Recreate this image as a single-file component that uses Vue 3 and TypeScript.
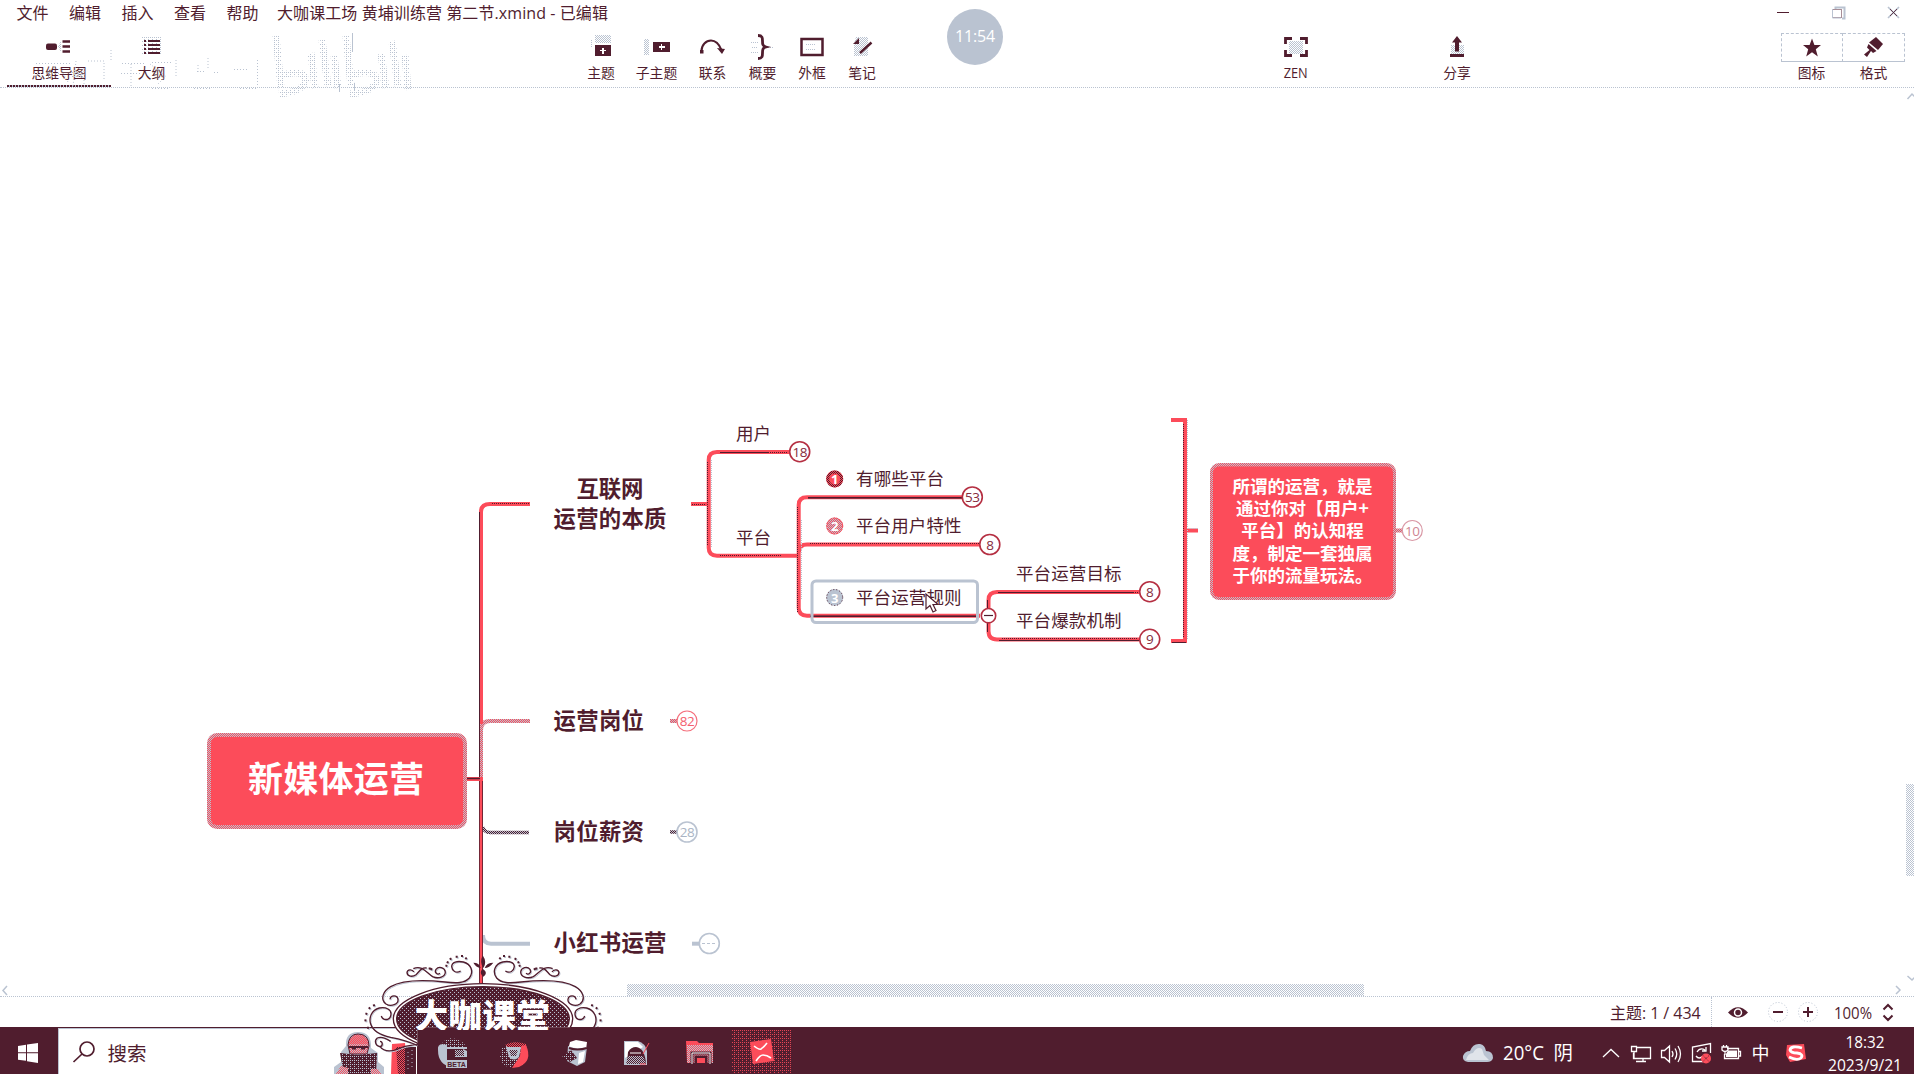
<script setup lang="ts">
interface Label { text: string; x: number; y: number; size: number; bold?: boolean; w: number }
interface Badge { n: string; x: number; y: number; tone: string }

const menus: string[] = ['文件', '编辑', '插入', '查看', '帮助']

const labels: Label[] = [
  { text: '互联网', x: 576.5, y: 489, size: 22.4, bold: true, w: 67 },
  { text: '运营的本质', x: 553.5, y: 519, size: 22.4, bold: true, w: 113 },
  { text: '运营岗位', x: 553.5, y: 721, size: 22.4, bold: true, w: 90.5 },
  { text: '岗位薪资', x: 553.5, y: 832, size: 22.4, bold: true, w: 90.5 },
  { text: '小红书运营', x: 553.5, y: 943, size: 22.4, bold: true, w: 113 },
  { text: '用户', x: 736, y: 433.5, size: 17.5, w: 35 },
  { text: '平台', x: 736, y: 537.5, size: 17.5, w: 35 },
  { text: '有哪些平台', x: 856, y: 479, size: 17.5, w: 88 },
  { text: '平台用户特性', x: 856, y: 526, size: 17.5, w: 105.5 },
  { text: '平台运营规则', x: 856, y: 598, size: 17.5, w: 105.5 },
  { text: '平台运营目标', x: 1016, y: 574, size: 17.5, w: 105.5 },
  { text: '平台爆款机制', x: 1016, y: 621, size: 17.5, w: 105.5 }
]

const badges: Badge[] = [
  { n: '18', x: 799.7, y: 451.7, tone: 'mix' },
  { n: '53', x: 972.3, y: 497, tone: 'mix' },
  { n: '8', x: 989.8, y: 544.5, tone: 'mix' },
  { n: '8', x: 1149.7, y: 591.7, tone: 'mix' },
  { n: '9', x: 1149.7, y: 639.3, tone: 'mix' },
  { n: '82', x: 687, y: 721, tone: 'soft' },
  { n: '28', x: 687, y: 832, tone: 'grey' },
  { n: '10', x: 1412.3, y: 530.5, tone: 'pale' }
]

const summary: string[] = ['所谓的运营，就是', '通过你对【用户+', '平台】的认知程', '度，制定一套独属', '于你的流量玩法。']
</script>

<template>
  <div class="app">
    <svg class="defs" width="0" height="0">
      <defs>
        <pattern id="pGrey" width="2" height="2" patternUnits="userSpaceOnUse" shape-rendering="crispEdges">
          <rect width="1" height="1" fill="#bac3d1" /><rect x="1" y="1" width="1" height="1" fill="#bac3d1" />
        </pattern>
        <pattern id="pDots" width="4" height="4" patternUnits="userSpaceOnUse" shape-rendering="crispEdges">
          <rect width="1" height="1" fill="#bac3d1" /><rect x="2" y="2" width="1" height="1" fill="#bac3d1" /><rect x="2" width="1" height="1" fill="#bac3d1" />
        </pattern>
        <pattern id="pRedGrey" width="2" height="2" patternUnits="userSpaceOnUse" shape-rendering="crispEdges">
          <rect width="2" height="2" fill="#fc4c5a" /><rect width="1" height="1" fill="#bac3d1" /><rect x="1" y="1" width="1" height="1" fill="#bac3d1" />
        </pattern>
        <pattern id="pRedDark" width="2" height="2" patternUnits="userSpaceOnUse" shape-rendering="crispEdges">
          <rect width="2" height="2" fill="#fc4c5a" /><rect width="1" height="1" fill="#501d2e" /><rect x="1" y="1" width="1" height="1" fill="#501d2e" />
        </pattern>
        <pattern id="pGreyDark" width="2" height="2" patternUnits="userSpaceOnUse" shape-rendering="crispEdges">
          <rect width="2" height="2" fill="#bac3d1" /><rect width="1" height="1" fill="#501d2e" /><rect x="1" y="1" width="1" height="1" fill="#501d2e" />
        </pattern>
        <pattern id="pSparse" width="12" height="12" patternUnits="userSpaceOnUse">
          <rect width="12" height="12" fill="#501d2e" />
          <rect width="3" height="3" fill="#bac3d1" /><rect x="6" y="6" width="3" height="3" fill="#bac3d1" />
        </pattern>
      </defs>
    </svg>

    <header class="menubar">
      <span v-for="m in menus" :key="m" class="menu">{{ m }}</span>
      <span class="title">大咖课工场 黄埔训练营 第二节.xmind - 已编辑</span>
      <svg class="winctl" width="140" height="28" viewBox="0 0 140 28" fill="none">
        <path d="M3 12.500H15" stroke="#501d2e" />
        <path d="M61.500 9V7.500H70.500V18.500H68" stroke="#bac3d1" stroke-width="2" />
        <rect x="58.500" y="9.500" width="9" height="8" stroke="#501d2e" stroke-dasharray="1 1" />
        <path d="M58.500 9V18H67" stroke="#bac3d1" />
        <path d="M114 7L125 18M125 7L114 18" stroke="#bac3d1" stroke-width="1.600" />
        <path d="M116 9L123 16M123 9L116 16" stroke="#501d2e" stroke-width=".8" />
      </svg>
    </header>

    <nav class="toolbar">
      <div class="tool tab active">
        <svg width="28" height="28" viewBox="0 0 28 28"><rect x="1" y="10.500" width="11" height="6.500" rx="2" fill="#501d2e" /><path d="M13 13.500L16 8V19Z" fill="url(#pGrey)" /><path d="M17.500 8.500H25M17.500 13.500H25M17.500 18.500H25" stroke="#501d2e" stroke-width="2.500" /></svg>
        <span>思维导图</span>
      </div>
      <div class="tool tab2">
        <svg width="28" height="28" viewBox="0 0 28 28"><rect x="4" y="4" width="20" height="18" fill="url(#pDots)" /><path d="M6 8H8M6 12H8M6 16H8M6 20H8M10 8H22M10 12H22M10 16H22M10 20H22" stroke="#501d2e" stroke-width="2" /></svg>
        <span>大纲</span>
      </div>
      <div class="tool topic">
        <svg width="28" height="28" viewBox="0 0 28 28" shape-rendering="crispEdges"><rect x="8" y="2" width="16" height="8" fill="url(#pGrey)" /><path d="M4.500 7V14" stroke="#bac3d1" stroke-dasharray="1 1" /><rect x="8" y="12" width="16" height="11" fill="#501d2e" /><path d="M13 17.500H19M16 14.500V20.500" stroke="#fff" stroke-width="1.600" /></svg>
        <span>主题</span>
      </div>
      <div class="tool sub">
        <svg width="36" height="28" viewBox="0 0 36 28" shape-rendering="crispEdges"><rect x="5" y="6" width="5" height="16" fill="url(#pGrey)" /><rect x="14" y="9" width="17" height="10" fill="#501d2e" /><path d="M19.500 14H25.500M22.500 11V17" stroke="#fff" stroke-width="1.600" /></svg>
        <span>子主题</span>
      </div>
      <div class="tool rel">
        <svg width="28" height="28" viewBox="0 0 28 28" fill="none"><path d="M2.500 18C2.500 12 7 7.500 12 7.500S20.500 12 22.500 17" stroke="#501d2e" stroke-width="2" /><rect x="1" y="17" width="3.500" height="3.500" fill="#501d2e" /><path d="M18 15L26 16L23 21Z" fill="#501d2e" /></svg>
        <span>联系</span>
      </div>
      <div class="tool sum">
        <svg width="28" height="28" viewBox="0 0 28 28" fill="none"><path d="M2 9.500H9M3 14.500H9M2 19.500H9M19 14.500H25" stroke="#bac3d1" stroke-dasharray="1 1" /><path d="M9 2.500C13.500 2.500 13.500 5 13.500 8S13.500 13 17 14C13.500 15 13.500 17 13.500 20S13.500 25.500 9 25.500" stroke="#501d2e" stroke-width="2.800" /></svg>
        <span>概要</span>
      </div>
      <div class="tool">
        <svg width="28" height="28" viewBox="0 0 28 28" fill="none"><rect x="3.500" y="6" width="21" height="16" stroke="#501d2e" stroke-width="2.500" /><path d="M8 11.500H17M8 16.500H17" stroke="#bac3d1" stroke-dasharray="1 1" /></svg>
        <span>外框</span>
      </div>
      <div class="tool">
        <svg width="28" height="28" viewBox="0 0 28 28"><path d="M8 4H20V23H6V11Z" fill="url(#pGrey)" /><path d="M5 11L11 5V11Z" fill="#501d2e" /><path d="M12 20L23.500 9.500" stroke="#501d2e" stroke-width="2.400" /></svg>
        <span>笔记</span>
      </div>
      <div class="tool zen">
        <svg width="28" height="28" viewBox="0 0 28 28" fill="none"><rect x="7" y="8" width="14" height="13" fill="url(#pGrey)" /><path d="M3.500 11V5.500H10M18 5.500H24.500V11M24.500 17V22.500H18M10 22.500H3.500V17" stroke="#501d2e" stroke-width="2.800" /></svg>
        <span>ZEN</span>
      </div>
      <div class="tool share">
        <svg width="28" height="28" viewBox="0 0 28 28"><rect x="8" y="12" width="13" height="9" fill="url(#pGrey)" /><path d="M14 3L19 9.500H16V18.500H12V9.500H9Z" fill="#501d2e" /><rect x="7" y="21" width="14" height="3" fill="#501d2e" /></svg>
        <span>分享</span>
      </div>
      <div class="panel">
        <div class="pbtn">
          <div class="pbox"><svg width="28" height="26" viewBox="0 0 28 26"><path d="M14 3.500L16.400 10H23L17.800 14.200L19.800 21.500L14 17.200L8.200 21.500L10.200 14.200L5 10H11.600Z" fill="#501d2e" /></svg></div>
          <span>图标</span>
        </div>
        <div class="pbtn last">
          <div class="pbox"><svg width="28" height="26" viewBox="0 0 28 26"><path d="M17 2L24 9L19 15L10 7.500Z" fill="#501d2e" /><path d="M9.500 9L17.500 16L14 18L12 16L8 22L5 19.500L10.500 15L8 12.500Z" fill="#501d2e" /></svg></div>
          <span>格式</span>
        </div>
      </div>
    </nav>

    <svg class="ghost" width="420" height="70" viewBox="0 0 420 70" fill="none">
      <g stroke="url(#pDots)" stroke-width="7">
        <path d="M276 8L281 60M281 48Q303 40 306 52Q303 64 279 66M311 25L315 60M322 12L328 58M334 28L338 60M346 8L351 58M351 47Q374 40 377 52Q374 64 350 66M381 26L386 60M392 13L398 58M405 27L408 62" />
      </g>
      <path d="M352.500 5V24M339.500 56V64M354.500 55V63" stroke="#bac3d1" />
      <path d="M47 44H54V52H47ZM72 42H84V50H72Z" fill="url(#pDots)" />
      <g stroke="#bac3d1" stroke-dasharray="1 2">
        <path d="M36 35.500H70M34 45.500H60M76 33L73 58M88 33H104V52M111 22V34M122 35.500H144M121 45.500H140M152 34.500H172M176 32V48M197 43.500H206M198 37V44M208 30V42M214 44.500H220M234 41.500H247M257.500 32V60M152 60.500H168M194 60.500H210M240 60.500H256M60 40L68 54M84 40V56M131 36V58" />
        <path d="M150 36L166 48L158 56" />
      </g>
    </svg>

    <div class="timer">11:54</div>

    <main class="canvas">
      <svg width="1914" height="909" viewBox="0 88 1914 909" fill="none">
        <!-- root connectors -->
        <path d="M483 935Q483 943.700 491 943.700H530" stroke="#bac3d1" stroke-width="4" />
        <path d="M483 827Q484 832.500 490 832.500H529" stroke="url(#pGreyDark)" stroke-width="3.500" />
        <path d="M481 780V983" stroke="#501d2e" stroke-width="4" />
        <path d="M481 780V983" stroke="#fc4c5a" stroke-width="2.400" />
        <path d="M481 779V730Q481 721 490 721H530" stroke="url(#pRedGrey)" stroke-width="4" />
        <path d="M481 724V512Q481 504 490 504H530" stroke="#fc4c5a" stroke-width="4" />
        <path d="M479.500 779V512" stroke="#501d2e" />
        <path d="M492 503.500H530" stroke="#501d2e" stroke-dasharray="1 1" />
        <path d="M467 779H483" stroke="#fc4c5a" stroke-width="4" />
        <path d="M467 778.500H480" stroke="#501d2e" stroke-width="1.500" />

        <!-- first topic subtree -->
        <g stroke="#fc4c5a" stroke-width="4">
          <path d="M691 504H709M790 452H717Q708.700 452 708.700 460V548Q708.700 555.700 717 555.700H799" />
          <path d="M962 497.300H807Q798.700 497.300 798.700 505V608Q798.700 615.700 807 615.700H980M799 552Q799 544.500 807 544.500H980" />
          <path d="M1139 592H997Q988.500 592 988.500 600V631Q988.500 639.500 997 639.500H1139" />
          <path d="M1171 420H1185V641H1171M1186 530.500H1198" />
        </g>
        <g stroke="#501d2e" stroke-width="1" shape-rendering="crispEdges">
          <path d="M720 452.500H768M808 497.500H962M810 616.500H978M998 592.500H1133M999 640.500H1139M1172 642.500H1186" />
          <path d="M768 452.500H788M720 555.500H782M810 543.500H980M1002 638.500H1138M692 504.500H706M797.500 507V612M1183.500 424V638M1133 592.500H1138M707.500 462V546" stroke-dasharray="1 1" />
          <path d="M810 615.500H978M808 498.500H962" stroke-opacity=".6" />
          <path d="M987.500 600V632" />
        </g>
        <path d="M711.500 460V548M1187.500 420V640M801.500 520V600M1187 528.500H1198" stroke="#bac3d1" stroke-dasharray="1 1" />

        <!-- collapsed branch stubs -->
        <path d="M670 721H677" stroke="url(#pRedGrey)" stroke-width="4" />
        <path d="M670 832H678" stroke="url(#pGreyDark)" stroke-width="3.500" />
        <path d="M692 943.700H699" stroke="#bac3d1" stroke-width="4" />
        <path d="M1395 530.500H1402" stroke="url(#pRedGrey)" stroke-width="4" />
        <circle cx="709.300" cy="943.500" r="10" fill="#fff" stroke="#bac3d1" stroke-width="1.600" />
        <path d="M702 943.500H717" stroke="#bac3d1" stroke-dasharray="3 2" />
        <g v-for="b in badges" :key="b.x + '-' + b.y" :class="['badge', b.tone]">
          <circle :cx="b.x" :cy="b.y" r="10" />
          <text :x="b.x" :y="b.y + 5" text-anchor="middle">{{ b.n }}</text>
        </g>

        <!-- selection frame and collapse handle -->
        <rect x="812" y="581" width="165.500" height="41.500" rx="4" stroke="#bac3d1" stroke-width="3" />
        <circle cx="988.500" cy="615.700" r="7.200" fill="#fff" stroke="#b52f42" stroke-width="1.600" />
        <path d="M984 615.500H993" stroke="#501d2e" stroke-width="1.200" />

        <!-- priority markers -->
        <circle cx="834.700" cy="479" r="8.500" fill="#fc4c5a" />
        <circle cx="834.700" cy="479" r="7" stroke="url(#pRedDark)" stroke-width="3" />
        <circle cx="834.700" cy="526" r="8.500" fill="url(#pRedGrey)" />
        <circle cx="834.700" cy="526" r="8" stroke="#fc4c5a" stroke-dasharray="2 1" />
        <circle cx="834.700" cy="597.500" r="8.500" fill="#bac3d1" />
        <circle cx="834.700" cy="597.500" r="8" stroke="#501d2e" stroke-dasharray="1 2" />
        <g class="mark"><text x="834.700" y="484">1</text><text x="834.700" y="531">2</text><text x="834.700" y="602.500">3</text></g>

        <text
          v-for="l in labels" :key="l.text" :x="l.x" :y="l.y + l.size * 0.37" :font-size="l.size"
          :textLength="l.w" :class="['label', { bold: l.bold }]"
        >{{ l.text }}</text>

        <!-- root topic -->
        <rect x="207" y="733" width="260" height="96" rx="10" fill="url(#pRedGrey)" />
        <rect x="211" y="737" width="252" height="88" rx="6" fill="#fc4c5a" />
        <text class="rootText" x="336" y="792" text-anchor="middle" textLength="176">新媒体运营</text>

        <!-- summary topic -->
        <rect x="1210" y="463" width="186" height="137" rx="9" fill="url(#pRedGrey)" />
        <rect x="1213" y="466.500" width="180" height="130.500" rx="6" fill="#fc4c5a" />
        <text v-for="(s, i) in summary" :key="s" class="sumText" x="1302.500" :y="492.500 + i * 22.400" text-anchor="middle">{{ s }}</text>

        <path d="M926 594V609L930 605.500L933 612L936 610.500L933 604.500H938Z" fill="#fff" stroke="#501d2e" stroke-width="1.200" />

        <!-- scrollbars -->
        <rect x="1906" y="784" width="8" height="92" fill="url(#pGrey)" />
        <rect x="627" y="984" width="737" height="12" fill="url(#pGrey)" />
        <path d="M1907.500 99L1912 94L1916 98M1907.500 976L1912 980L1916 976M7 986L3 990.500L7 995M1896 986L1900 990L1896 994" stroke="#bac3d1" stroke-width="1.500" />
      </svg>
    </main>

    <footer class="status">
      <span class="count">主题: 1 / 434</span>
      <svg width="202" height="30" viewBox="1712 997 202 30" fill="none">
        <path d="M1728 1012.500Q1738 1002 1748 1012.500Q1738 1023 1728 1012.500Z" fill="#501d2e" />
        <circle cx="1738" cy="1012.500" r="3.500" stroke="#fff" stroke-width="1.500" />
        <circle cx="1778" cy="1012" r="9.500" stroke="#bac3d1" stroke-dasharray="1 2" />
        <circle cx="1808" cy="1012" r="9.500" stroke="#bac3d1" stroke-dasharray="1 2" />
        <path d="M1773 1012H1783M1803 1012H1813M1808 1007V1017" stroke="#501d2e" stroke-width="2" />
        <text x="1834" y="1019" class="zoomText" textLength="38" lengthAdjust="spacingAndGlyphs">100%</text>
        <path d="M1883.500 1009.500L1888 1005L1892.500 1009.500M1883.500 1015.500L1888 1020L1892.500 1015.500" stroke="#501d2e" stroke-width="2" />
      </svg>
    </footer>

    <footer class="taskbar">
      <div class="start">
        <svg width="22" height="22" viewBox="0 0 22 22" fill="#fff"><path d="M1 4L9 2.800V10.200H1ZM10 2.600L21 1V10.200H10ZM1 11.300H9V18.800L1 17.700ZM10 11.300H21V21L10 19.200Z" /></svg>
      </div>
      <div class="search">
        <svg width="24" height="24" viewBox="0 0 24 24" fill="none" stroke="#501d2e" stroke-width="1.700"><circle cx="15" cy="9" r="7" /><path d="M10 14L1.500 22" /></svg>
        <span>搜索</span>
        <svg class="reader" width="86" height="44" viewBox="332 1030 86 44">
          <path d="M346 1046Q345 1032 358 1032Q372 1032 371 1048L378 1053V1062L384 1067V1074H334V1067L341 1062V1052Z" fill="#bac3d1" />
          <path d="M348 1045Q349 1034 358 1034Q369 1034 369 1046L367 1054H350Z" fill="url(#pRedGrey)" stroke="#501d2e" />
          <path d="M349 1044Q350 1035 358 1035Q367 1035 368 1044" fill="#fc4c5a" fill-opacity=".5" />
          <path d="M349 1047H368M352 1048.500H356M361 1048.500H365" stroke="#501d2e" stroke-width="2" />
          <path d="M340 1053L358 1055L377 1053L376 1074H344Z" fill="#501d2e" />
          <path d="M340 1053L358 1055L377 1053L376 1074H344Z" fill="url(#pDots)" />
          <path d="M336 1074L341 1066L348 1068V1074ZM371 1074V1069L378 1069L381 1074Z" fill="url(#pRedGrey)" />
          <path d="M392 1044L405 1043L406 1062L402 1074H391Z" fill="#fc4c5a" />
          <path d="M396 1047H406V1074H398Z" fill="url(#pRedDark)" />
          <rect x="405" y="1047" width="11" height="27" fill="#501d2e" />
          <path d="M408 1052V1072M412 1050V1070" stroke="#bac3d1" stroke-dasharray="1 3" />
        </svg>
      </div>
      <svg class="apps" width="383" height="46" viewBox="417 1028 383 46">
        <path d="M438 1050Q437 1042 447 1045V1061Q449 1065 452 1067Q438 1065 438 1050Z" fill="#bac3d1" />
        <path d="M441 1045Q446 1036 456 1039Q464 1041 467 1049H438Z" fill="url(#pDots)" />
        <path d="M447 1047H467V1049H447ZM463 1049L467 1051V1057H455V1055H463Z" fill="#bac3d1" /><rect x="455" y="1050" width="9" height="6" fill="url(#pGreyDark)" />
        <rect x="446" y="1060" width="21" height="8" fill="#bac3d1" />
        <text x="456.500" y="1067" text-anchor="middle" class="beta">BETA</text>

        <path d="M502 1048Q513 1038 526 1046Q532 1058 521 1066L513 1068Q501 1067 500 1056Z" fill="#501d2e" />
        <path d="M502 1048Q513 1038 526 1046Q532 1058 521 1066L513 1068Q501 1067 500 1056Z" fill="url(#pDots)" />
        <path d="M505 1045Q515 1040 526 1044V1047H508Z" fill="url(#pRedDark)" />
        <path d="M521 1046L526 1045Q533 1061 519 1067L512 1068L520 1056Z" fill="#fc4c5a" />
        <path d="M506 1047H521L519 1057Q514 1062 509 1057Z" fill="#bac3d1" /><path d="M509 1050H518L516 1056H511Z" fill="url(#pGreyDark)" />

        <path d="M570 1042L576 1040L587 1042L586 1050H568Z" fill="#fff" /><path d="M568 1046Q577 1050 587 1047L585 1062L577 1066L567 1061Z" fill="#bac3d1" />
        <path d="M569 1048Q577 1051 587 1048" stroke="#501d2e" stroke-width="2" fill="none" /><path d="M562 1056L571 1050L577 1058L570 1062Z" fill="#501d2e" /><path d="M562 1056L571 1050L577 1058L570 1062Z" fill="url(#pDots)" /><path d="M579 1053L585 1051L583 1062L578 1064Z" fill="#fff" />

        <path d="M624 1041H638Q645 1043 647 1051V1065H624Z" fill="#bac3d1" /><path d="M625 1042H638L643 1047L625 1058Z" fill="#fff" />
        <path d="M627 1064L628 1052Q631 1047 636 1047Q645 1048 646 1064Z" fill="#501d2e" /><path d="M628 1056H643L646 1064H626Z" fill="url(#pGreyDark)" /><path d="M630 1053H641" stroke="#fff" />
        <path d="M649 1043L643 1054M640 1064H646" stroke="#fc4c5a" />

        <path d="M686 1041H697L699 1043H713V1063H687Z" fill="#fc4c5a" /><path d="M687 1045H713V1063H687Z" fill="url(#pRedGrey)" />
        <path d="M692 1064V1053H710V1064M696 1064V1057H706V1064" fill="none" stroke="#501d2e" stroke-width="3" /><path d="M692 1064V1053H710V1064" fill="none" stroke="#fff" /><rect x="697" y="1058" width="8" height="5" fill="#fc4c5a" />

        <path d="M732 1030.500H792M732 1034.500H792M732 1038.500H792M732 1042.500H792M732 1046.500H792M732 1050.500H792M732 1054.500H792M732 1058.500H792M732 1062.500H792M732 1066.500H792M732 1070.500H792" stroke="#fc4c5a" stroke-dasharray="1 1" stroke-opacity=".85" />
        <path d="M732 1032.500H792M732 1036.500H792M732 1040.500H792M732 1044.500H792M732 1048.500H792M732 1052.500H792M732 1056.500H792M732 1060.500H792M732 1064.500H792M732 1068.500H792M732 1072.500H792" stroke="#fc4c5a" stroke-dasharray="1 3" stroke-dashoffset="2" stroke-opacity=".85" />
        <path d="M750 1042L771 1039L774 1061L753 1064Z" fill="#fc4c5a" />
        <path d="M754 1046Q759 1050 761 1049Q764 1047 767 1043M756 1061Q760 1055 763 1055Q767 1055 771 1058" stroke="#fff" stroke-width="1.600" fill="none" />
      </svg>
      <svg class="tray" width="484" height="46" viewBox="1430 1028 484 46" fill="none">
        <path d="M1468 1062Q1462 1061 1463 1056Q1465 1051 1470 1051Q1473 1043 1480 1044Q1485 1045 1486 1051Q1493 1051 1493 1058Q1492 1062 1487 1062Z" fill="#bac3d1" />
        <path d="M1466 1060Q1468 1053 1473 1053Q1477 1046 1482 1049L1484 1055L1489 1060Z" fill="#fff" opacity=".55" />
        <text x="1503" y="1060" class="weather" textLength="41" lengthAdjust="spacingAndGlyphs">20°C</text><text x="1553.500" y="1060" class="weather">阴</text>
        <g stroke="#fff" stroke-width="1.300">
          <path d="M1603 1057L1611 1049.500L1619 1057" />
          <path d="M1637 1047.500H1650.500V1058.500H1633.500V1053M1643 1058.500V1061M1636 1061.500H1646M1631.500 1046.500H1636.500V1051.500H1631.500ZM1634 1052V1058" />
          <path d="M1661.500 1050.500H1664.500L1669.500 1046V1062L1664.500 1057.500H1661.500ZM1672 1051Q1674 1054 1672 1057M1675 1048.500Q1678.500 1054 1675 1059.500M1678 1046Q1683 1054 1678 1062" />
          <path d="M1703 1061.500H1692.500V1047L1710.500 1043.500V1053M1697 1052Q1700 1047 1705 1050M1706 1047V1051H1702M1703 1056Q1699 1060 1696 1056" />
          <path d="M1727 1048.500H1738.500V1058.500H1724.500V1054M1739 1051.500H1740.500V1056H1739M1722 1047H1728V1050Q1725 1053 1722 1050ZM1723.500 1045V1047M1726.500 1045V1047M1725 1052V1055" />
        </g>
        <path d="M1728 1050.500H1737V1057H1726V1054Z" fill="#fff" />
        <circle cx="1706" cy="1058.500" r="5" fill="#fc4c5a" /><path d="M1703 1055.500L1709 1061.500M1709 1055.500L1703 1061.500" stroke="#501d2e" stroke-dasharray="1 1" />
        <text x="1751.500" y="1060" class="ime">中</text>
        <path d="M1787 1045L1804 1044L1806 1059L1790 1062L1786 1055Z" fill="#fc4c5a" />
        <path d="M1802 1048Q1791 1045 1790 1050Q1791 1053 1797 1053Q1804 1054 1801 1058Q1797 1061 1789 1057" stroke="#fff" stroke-width="2.800" />
        <text x="1865" y="1047.500" text-anchor="middle" class="clock" textLength="39" lengthAdjust="spacingAndGlyphs">18:32</text>
        <text x="1865" y="1070.500" text-anchor="middle" class="clock" textLength="74" lengthAdjust="spacingAndGlyphs">2023/9/21</text>
      </svg>
    </footer>

    <!-- ornamental course emblem -->
    <svg class="emblem" width="300" height="134" viewBox="0 0 900 402" fill="none">
      <defs>
        <clipPath id="emblemClip"><path d="M0 0H900V262H262V402H0Z" /></clipPath>
        <clipPath id="wordClip"><rect width="900" height="270" /></clipPath>
        <g id="scroll">
          <path d="M392 93C378 102 366 92 365 80C365 66 382 62 400 66C424 72 432 96 418 114C404 130 380 130 345 126C290 120 220 118 182 140C158 154 150 178 168 192C184 202 206 192 204 178C202 164 182 164 180 178" />
          <path d="M252 96C246 86 232 88 231 98C232 110 248 112 258 104C270 92 274 82 290 84M250 86C278 74 290 100 308 110C326 118 346 110 346 96C344 82 326 78 318 88C312 98 322 106 330 100" />
          <path d="M154 228C158 242 178 242 182 228C188 208 166 200 148 204C124 210 116 234 122 252C130 276 154 286 182 292C214 298 240 306 262 316" />
          <path d="M150 304C158 304 160 318 150 320C136 318 132 302 142 294C154 288 170 296 182 304M150 320C164 338 190 334 210 324C234 314 248 318 262 312" />
          <path d="M348 80L354 64M359 58L367 54M377 50H384M393 48H400M406 53L410 57M296 86L306 84L300 94M106 244L107 236M108 224L111 216M116 206L121 202M129 197L137 194M114 260V266" stroke-width="6" stroke-dasharray="6 5" />
        </g>
      </defs>
      <g clip-path="url(#emblemClip)">
        <ellipse cx="459" cy="237" rx="269" ry="106" fill="#fff" stroke="#501d2e" stroke-width="4" />
        <ellipse cx="459" cy="237" rx="259" ry="97" fill="url(#pSparse)" stroke="#501d2e" stroke-width="4" />
        <g stroke="#bac3d1" stroke-width="3" transform="translate(3 3)"><use href="#scroll" /><use href="#scroll" transform="translate(918 0) scale(-1 1)" /></g>
        <g stroke="#501d2e" stroke-width="4"><use href="#scroll" /><use href="#scroll" transform="translate(918 0) scale(-1 1)" /></g>
        <path d="M458 46Q472 66 460 84Q448 68 458 46M452 84Q438 82 430 68Q448 68 452 84M464 84Q478 84 490 68Q470 68 464 84M458 86Q476 98 460 110Q446 98 458 86" fill="#501d2e" />
      </g>
      <text clip-path="url(#wordClip)" x="254" y="264" class="wordmark" textLength="405">大咖课堂</text>
    </svg>
  </div>
</template>

<style>
html, body { margin: 0; background: #fff; overflow: hidden; }
</style>

<style scoped>
.app {
  position: relative;
  width: 1914px;
  height: 1074px;
  display: flex;
  flex-direction: column;
  overflow: hidden;
  background: #fff;
  color: #501d2e;
  font-family: "Open Sans", "Noto Sans CJK SC", sans-serif;
}
.defs { position: absolute; }
svg { display: block; flex: none; }
.menubar { height: 28px; display: flex; align-items: center; padding-left: 16.500px; font-size: 16px; line-height: 27px; flex: none; }
.menubar span { height: 28px; white-space: nowrap; }
.menu { width: 32px; margin-right: 20.500px; }
.title { margin-left: -2px; letter-spacing: .08px; }
.winctl { margin-left: auto; }
.toolbar { height: 59px; flex: none; display: flex; padding-left: 7px; border-bottom: 1px dotted #bac3d1; }
.tool { width: 50px; display: flex; flex-direction: column; align-items: center; padding-top: 5px; box-sizing: border-box; height: 59px; font-size: 13.800px; white-space: nowrap; }
.tool span, .pbtn span { line-height: 20px; margin-top: 1.500px; }
.tab { width: 104px; }
.active { background: repeating-linear-gradient(90deg, #501d2e 0 2px, #bac3d1 2px 3px) left bottom / 100% 2px no-repeat; }
.tab2 { width: 81px; }
.topic { margin-left: 384px; }
.sub { width: 61px; }
.rel { width: 51px; }
.sum { width: 49px; }
.zen { margin-left: 384px; }
.zen span { font-size: 14.500px; transform: scaleX(.88); }
.share { margin-left: 111px; }
.panel { margin-left: auto; margin-right: 9.500px; display: flex; padding-top: 5px; }
.pbtn { width: 62px; display: flex; flex-direction: column; align-items: center; font-size: 13.800px; }
.pbox { box-sizing: border-box; width: 62px; height: 29px; border: 1px dashed #bac3d1; border-bottom-style: solid; display: flex; align-items: center; justify-content: center; }
.pbtn span { margin-top: .5px; }
.last .pbox { border-left: none; }
.ghost { position: absolute; left: 0; top: 28px; }
.timer { position: absolute; left: 947px; top: 9px; width: 56px; height: 56px; border-radius: 50%; background: #bac3d1; color: #fff; font-size: 16px; line-height: 55px; text-align: center; letter-spacing: -.2px; }
.canvas { height: 908px; flex: none; overflow: hidden; border-bottom: 1px dotted #bac3d1; }
.label { fill: #501d2e; font-family: "Noto Sans CJK SC", sans-serif; }
.bold { font-weight: 700; }
.rootText { font: 700 35px "Noto Sans CJK SC", sans-serif; fill: #fff; }
.sumText { font: 700 17.500px "Noto Sans CJK SC", sans-serif; fill: #fff; }
.mark text { font: 700 13px "Open Sans", sans-serif; fill: #fff; text-anchor: middle; }
.badge circle { fill: #fff; stroke: #b52f42; stroke-width: 1.600; }
.badge text { font-size: 13.500px; fill: #862b3d; letter-spacing: -.4px; }
.soft circle { stroke: #f4707d; stroke-width: 1.200; }
.soft text { fill: #f4606e; }
.grey circle { stroke: #bac3d1; }
.grey text { fill: #aab4c4; }
.pale circle { stroke: #d998a5; stroke-width: 1.200; }
.pale text { fill: #cf8592; }
.status { height: 30px; flex: none; display: flex; }
.count { width: 102px; margin-left: auto; box-sizing: border-box; border-right: 1px dotted #bac3d1; font-size: 16px; line-height: 32px; white-space: nowrap; letter-spacing: -.05px; }
.zoomText { font-size: 16px; fill: #501d2e; }
.taskbar { flex: none; height: 47px; display: flex; align-items: flex-end; background: #501d2e; color: #fff; }
.start { width: 58px; height: 46px; display: flex; align-items: center; justify-content: center; }
.start svg { margin-left: -2px; margin-top: 4px; }
.search { width: 359px; height: 46px; box-sizing: border-box; border-top: 1px solid #bac3d1; border-left: 1px solid #bac3d1; background: #fff; color: #501d2e; display: flex; align-items: center; padding-left: 13px; font-size: 19.500px; }
.search span { margin-left: 11.500px; line-height: 44px; margin-top: 4px; }
.reader { margin-left: auto; margin-right: -1px; }
.tray { margin-left: auto; }
.weather { font-size: 19.500px; fill: #fff; }
.ime { font-size: 18px; fill: #fff; }
.clock { font-size: 16px; fill: #fff; }
.beta { font: 800 7px "Liberation Sans", sans-serif; fill: #501d2e; }
.emblem { position: absolute; left: 330px; top: 940px; }
.wordmark { font: 900 100px "Noto Sans CJK SC", sans-serif; fill: #fff; }
</style>
